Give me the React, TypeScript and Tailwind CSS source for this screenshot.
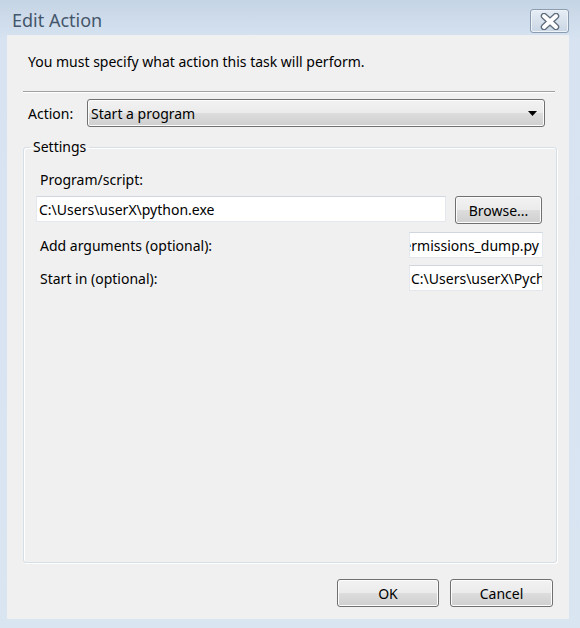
const ui = "font-['Noto_Sans',sans-serif] text-[14px] text-black";

const btn =
  "h-[28px] rounded-[3px] border border-[#707070] bg-[linear-gradient(#f2f2f2_0%,#ebebeb_49%,#dddddd_50%,#cfcfcf_100%)] shadow-[inset_0_0_0_1px_#fcfcfc] flex items-center justify-center";

const CloseIcon = () => (
  <svg width="22" height="17" viewBox="0 0 22 17">
    <path d="M5 3 L17 14 M17 3 L5 14" stroke="#5d6b7c" strokeWidth="6.5" strokeLinecap="round" fill="none" />
    <path d="M5 3 L17 14 M17 3 L5 14" stroke="#ffffff" strokeWidth="4" strokeLinecap="round" fill="none" />
  </svg>
);

const Field = ({ children, className = "" }: { children: React.ReactNode; className?: string }) => (
  <div
    className={`h-[26px] bg-white border border-[#e2e8ee] border-t-[#cfd6de] flex items-center overflow-hidden whitespace-nowrap ${className}`}
  >
    {children}
  </div>
);

const App = () => {
  return (
    <div className={`w-[580px] h-[628px] flex flex-col bg-[linear-gradient(#c5d4e4_0px,#d7e3f1_40px,#dae5f2_100%)] ${ui}`}>
      {/* title bar */}
      <div className="h-[35px] flex items-start justify-between pl-[12px] pr-[11px]">
        <span className="mt-[7px] text-[18px] leading-[26px] text-[#44566b]">Edit Action</span>
        <button className="mt-[9px] w-[39px] h-[24px] rounded-[3px] border border-[#8b9cb0] bg-[linear-gradient(#e6edf5,#c9d6e4)] shadow-[inset_0_0_0_1px_#eef3f8] flex items-center justify-center">
          <CloseIcon />
        </button>
      </div>

      {/* client area */}
      <div className="flex-1 ml-[7px] mr-[11px] mb-[9px] bg-[#f0f0f0] flex flex-col">
        <p className="mt-[16px] ml-[21px] leading-[22px]">You must specify what action this task will perform.</p>

        <div className="mt-[18px] ml-[16px] mr-[14px] h-[2px] border-t border-[#a0a0a0] border-b border-b-white" />

        <div className="mt-[6px] ml-[21px] mr-[24px] flex items-center gap-[10px]">
          <span className="w-[49px]">Action:</span>
          <div className="flex-1 h-[28px] rounded-[3px] border border-[#707070] bg-[linear-gradient(#f2f2f2_0%,#ebebeb_49%,#dddddd_50%,#cfcfcf_100%)] shadow-[inset_0_0_0_1px_#fcfcfc] flex items-center justify-between pl-[3px] pr-[7px]">
            <span>Start a program</span>
            <svg width="9" height="5" viewBox="0 0 9 5">
              <path d="M0 0 H9 L4.5 5 Z" fill="#000" />
            </svg>
          </div>
        </div>

        <fieldset className="mt-[10px] ml-[16px] mr-[12px] h-[426px] rounded-[3px] border border-[#d5dfe5] shadow-[inset_1px_1px_0_#ffffff,1px_1px_0_#ffffff] px-[12px]">
          <legend className="ml-[-6px] px-[3px] leading-[20px]">Settings</legend>

          <div className="mt-[13px] ml-[4px] leading-[20px]">Program/script:</div>
          <div className="mt-[6px] flex items-start gap-[9px] pr-[2px]">
            <Field className="flex-1 pl-[2px]">C:\Users\userX\python.exe</Field>
            <div className={`w-[87px] ${btn}`}>Browse...</div>
          </div>

          <div className="mt-[8px] flex items-center pr-[1px]">
            <span className="flex-1 ml-[4px]">Add arguments (optional):</span>
            <Field className="w-[134px] justify-end pr-[3px]">permissions_dump.py</Field>
          </div>
          <div className="mt-[7px] flex items-center pr-[1px]">
            <span className="flex-1 ml-[4px]">Start in (optional):</span>
            <Field className="w-[134px] pl-[1px]">C:\Users\userX\PycharmProjects</Field>
          </div>
        </fieldset>

        <div className="mt-[16px] mr-[16px] flex justify-end gap-[11px]">
          <div className={`w-[102px] ${btn} border-[#3c7fb1] shadow-[inset_0_0_0_1px_#48d2fd,inset_0_0_0_2px_#d8f2fc]`}>OK</div>
          <div className={`w-[103px] ${btn}`}>Cancel</div>
        </div>
      </div>
    </div>
  );
};

export default App;
